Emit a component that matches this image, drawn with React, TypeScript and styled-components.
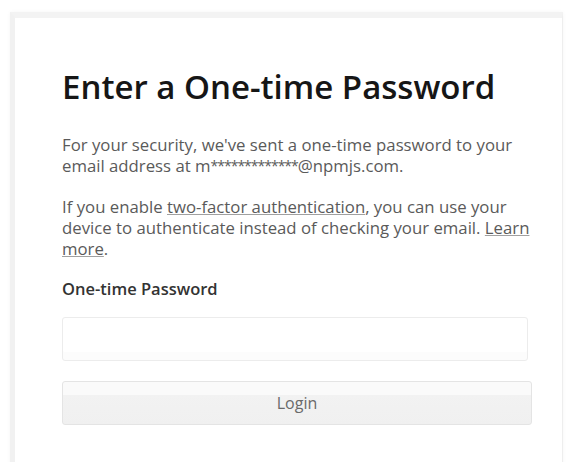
import React from "react";
import styled, { createGlobalStyle } from "styled-components";

const GlobalStyle = createGlobalStyle`
  html, body {
    margin: 0;
    padding: 0;
    background: #ffffff;
  }
  body {
    font-family: "Open Sans", "Liberation Sans", sans-serif;
    -webkit-font-smoothing: antialiased;
  }
`;

const Page = styled.div`
  padding: 12px 9px 0 10px;
  height: 462px;
  box-sizing: border-box;
  overflow: hidden;
`;

const Card = styled.div`
  background: #fff;
  border: 1px solid #eeeeee;
  border-top: 6px solid #f3f3f3;
  border-left: 5px solid #f1f1f1;
  box-shadow: 0 0 4px rgba(0, 0, 0, 0.04);
  padding: 49px 24px 40px 47px;
  min-height: 480px;
  box-sizing: border-box;
`;

const Title = styled.h1`
  margin: 0 0 27px;
  font-size: 33px;
  font-weight: 600;
  line-height: 40px;
  color: #161616;
`;

const Paragraph = styled.p`
  margin: 0 0 20px;
  font-size: 16.75px;
  line-height: 21px;
  color: #5a5a5a;
`;

// masked part of the address: small, tightly set stars
const Masked = styled.span`
  font-size: 14px;
  letter-spacing: -1px;
  vertical-align: 1px;
`;

const TextLink = styled.a`
  color: #5a5a5a;
  text-decoration: underline;
  text-decoration-color: #a0a0a0;
`;

const Label = styled.label`
  display: block;
  margin: 0 0 18px;
  font-size: 16.5px;
  font-weight: 600;
  line-height: 20px;
  color: #333;
`;

const Field = styled.input`
  display: block;
  width: 466px;
  height: 44px;
  box-sizing: border-box;
  border: 1px solid #ececec;
  border-radius: 3px;
  background: #fff;
  box-shadow: inset 0 -8px 0 #fcfcfc;
  margin: 0 0 20px;
`;

const Button = styled.button`
  display: block;
  width: 470px;
  height: 44px;
  box-sizing: border-box;
  border: 1px solid #e4e4e4;
  border-radius: 3px;
  background: linear-gradient(#fafafa 0, #fafafa 30%, #f2f2f2 30%, #f0f0f0 100%);
  font-family: "Open Sans", "Liberation Sans", sans-serif;
  font-size: 16px;
  color: #6a6a6a;
  cursor: pointer;
`;

export default function App() {
  return (
    <Page>
      <GlobalStyle />
      <Card>
        <Title>Enter a One-time Password</Title>
        <Paragraph>
          For your security, we've sent a one-time password to your email address at
          m<Masked>*************</Masked>@npmjs.com.
        </Paragraph>
        <Paragraph>
          If you enable <TextLink href="#">two-factor authentication</TextLink>, you can use your
          device to authenticate instead of checking your email.{" "}
          <TextLink href="#">Learn more</TextLink>.
        </Paragraph>
        <Label htmlFor="otp">One-time Password</Label>
        <Field id="otp" type="text" />
        <Button type="button">Login</Button>
      </Card>
    </Page>
  );
}
